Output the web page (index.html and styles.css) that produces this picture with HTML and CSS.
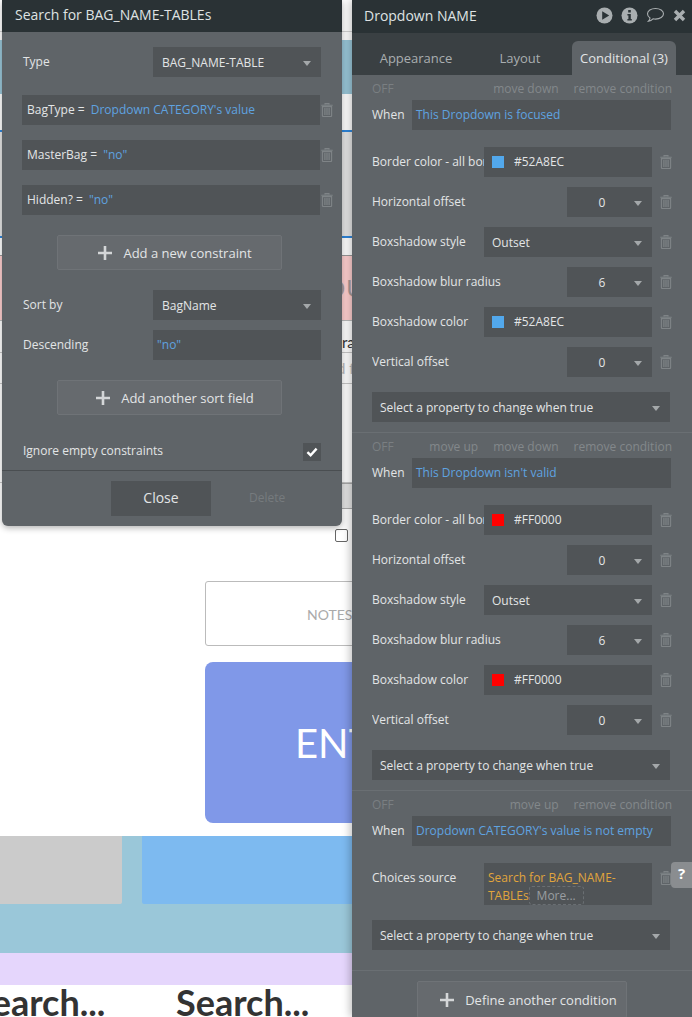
FILE: index.html
```html
<!DOCTYPE html>
<html lang="en">

<head>
    <meta charset="UTF-8">
    <meta name="viewport" content="width=device-width, initial-scale=1.0">
    <title>Dropdown NAME</title>
    <link rel="stylesheet" href="styles.css">
</head>

<body>
    <svg class="defs" width="0" height="0">
        <symbol id="trash" viewBox="0 0 12 14">
            <path d="M4 1.5V.6h4v.9M.3 2.2h11.4" fill="none" stroke="currentColor" stroke-width="1.1" />
            <path d="M1.4 3.6h9.2v9a1 1 0 0 1-1 1H2.4a1 1 0 0 1-1-1z" fill="none" stroke="currentColor" stroke-width="1.1" />
            <path d="M3.9 5v7M6 5v7M8.1 5v7" fill="none" stroke="currentColor" stroke-width="1.2" />
        </symbol>
        <symbol id="plus" viewBox="0 0 14 14">
            <path d="M7 0v14M0 7h14" fill="none" stroke="currentColor" stroke-width="2.6" />
        </symbol>
    </svg>

    <!-- page behind the palettes -->
    <div class="page">
        <div class="band top-white"></div>
        <div class="band teal-strip"></div>
        <div class="band white-gap"></div>
        <div class="band grey-block"></div>
        <div class="band white-small"></div>
        <div class="band pink"><span>OU</span></div>
        <div class="band row-ra"><span>ra</span></div>
        <div class="band row-df"><span>d f</span></div>
        <div class="band row-gap"></div>
        <div class="band row-input"></div>
        <div class="check-row"><div class="fake-check"></div></div>
        <div class="notes">NOTES ABOUT THIS ENTRY</div>
        <div class="enter">ENTER</div>
        <div class="teal-area">
            <div class="grey-tile"></div>
            <div class="blue-tile"></div>
        </div>
        <div class="lilac"></div>
        <div class="search-row">
            <div class="search-text first">Search...</div>
            <div class="search-text">Search...</div>
        </div>
    </div>

    <!-- search palette -->
    <div class="palette search-palette">
        <div class="head">Search for BAG_NAME-TABLEs</div>
        <div class="search-body">
            <div class="line-row">
                <div class="line-label">Type</div>
                <div class="field select-field wide">BAG_NAME-TABLE<i class="caret"></i></div>
            </div>
            <div class="constraint">
                <div class="field grow">BagType = <span class="dyn">Dropdown CATEGORY's value</span></div>
                <svg class="trash"><use href="#trash" /></svg>
            </div>
            <div class="constraint">
                <div class="field grow">MasterBag = <span class="dyn">"no"</span></div>
                <svg class="trash"><use href="#trash" /></svg>
            </div>
            <div class="constraint">
                <div class="field grow">Hidden? = <span class="dyn">"no"</span></div>
                <svg class="trash"><use href="#trash" /></svg>
            </div>
            <div class="big-btn add-constraint"><svg class="plus"><use href="#plus" /></svg>Add a new constraint</div>
            <div class="line-row sort-row">
                <div class="line-label">Sort by</div>
                <div class="field select-field wide">BagName<i class="caret"></i></div>
            </div>
            <div class="line-row desc-row">
                <div class="line-label">Descending</div>
                <div class="field wide tight dyn">"no"</div>
            </div>
            <div class="big-btn add-sort"><svg class="plus"><use href="#plus" /></svg>Add another sort field</div>
            <div class="line-row ignore-row">
                <div class="line-label">Ignore empty constraints</div>
                <div class="checkbox">
                    <svg width="12" height="10" viewBox="0 0 12 10"><path d="M1.4 5.2l3.2 3L10.6 1.6" fill="none" stroke="#fff" stroke-width="2.4" /></svg>
                </div>
            </div>
        </div>
        <div class="foot">
            <div class="close-btn">Close</div>
            <div class="delete-btn">Delete</div>
        </div>
    </div>

    <!-- property editor -->
    <div class="palette editor">
        <div class="head editor-head">
            <span>Dropdown NAME</span>
            <div class="head-icons">
                <svg width="17" height="17" viewBox="0 0 17 17"><circle cx="8.5" cy="8.5" r="8" fill="#a9aeb0" /><path d="M6.2 4.2l7 4.3-7 4.3z" fill="#2b3336" /></svg>
                <svg width="17" height="17" viewBox="0 0 17 17"><circle cx="8.5" cy="8.5" r="8" fill="#a9aeb0" /><path d="M7.2 3h2.6v2.4H7.2zM6.4 7h3.4v5h1v1.6H6.4V12h1V8.6h-1z" fill="#2b3336" /></svg>
                <svg width="19" height="17" viewBox="0 0 19 17"><path d="M9.5 1.5c4.6 0 8 2.3 8 5.3s-3.4 5.300-8 5.300c-.9 0-1.700-.1-2.500-.3-1.300 1.300-2.800 2.100-4.500 2.400.9-.9 1.400-1.900 1.500-3.200-1.700-1-2.500-2.500-2.500-4.200 0-3 3.400-5.300 8-5.300z" fill="none" stroke="#a9aeb0" stroke-width="1.100" /></svg>
                <svg width="13" height="13" viewBox="0 0 13 13"><path d="M2 2l9 9M11 2l-9 9" fill="none" stroke="#a9aeb0" stroke-width="3.400" /></svg>
            </div>
        </div>
        <div class="tabs">
            <div class="tab">Appearance</div>
            <div class="tab">Layout</div>
            <div class="tab active">Conditional (3)</div>
        </div>

        <div class="cond">
            <div class="cond-top">
                <span class="off">OFF</span>
                <span class="cond-actions"><span>move down</span><span>remove condition</span></span>
            </div>
            <div class="when-row">
                <div class="when-label">When</div>
                <div class="field grow dyn">This Dropdown is focused</div>
            </div>
            <div class="props">
                <div class="prop"><div class="prop-label">Border color - all borders</div><div class="field color-field"><i class="swatch sw-blue"></i>#52A8EC</div><svg class="trash"><use href="#trash" /></svg></div>
                <div class="prop"><div class="prop-label">Horizontal offset</div><div class="field num-field">0<i class="caret"></i></div><svg class="trash"><use href="#trash" /></svg></div>
                <div class="prop"><div class="prop-label">Boxshadow style</div><div class="field select-field prop-select">Outset<i class="caret"></i></div><svg class="trash"><use href="#trash" /></svg></div>
                <div class="prop"><div class="prop-label">Boxshadow blur radius</div><div class="field num-field">6<i class="caret"></i></div><svg class="trash"><use href="#trash" /></svg></div>
                <div class="prop"><div class="prop-label">Boxshadow color</div><div class="field color-field"><i class="swatch sw-blue"></i>#52A8EC</div><svg class="trash"><use href="#trash" /></svg></div>
                <div class="prop"><div class="prop-label">Vertical offset</div><div class="field num-field">0<i class="caret"></i></div><svg class="trash"><use href="#trash" /></svg></div>
            </div>
            <div class="field select-field pick">Select a property to change when true<i class="caret"></i></div>
        </div>

        <div class="cond">
            <div class="cond-top">
                <span class="off">OFF</span>
                <span class="cond-actions"><span>move up</span><span>move down</span><span>remove condition</span></span>
            </div>
            <div class="when-row">
                <div class="when-label">When</div>
                <div class="field grow dyn">This Dropdown isn't valid</div>
            </div>
            <div class="props">
                <div class="prop"><div class="prop-label">Border color - all borders</div><div class="field color-field"><i class="swatch sw-red"></i>#FF0000</div><svg class="trash"><use href="#trash" /></svg></div>
                <div class="prop"><div class="prop-label">Horizontal offset</div><div class="field num-field">0<i class="caret"></i></div><svg class="trash"><use href="#trash" /></svg></div>
                <div class="prop"><div class="prop-label">Boxshadow style</div><div class="field select-field prop-select">Outset<i class="caret"></i></div><svg class="trash"><use href="#trash" /></svg></div>
                <div class="prop"><div class="prop-label">Boxshadow blur radius</div><div class="field num-field">6<i class="caret"></i></div><svg class="trash"><use href="#trash" /></svg></div>
                <div class="prop"><div class="prop-label">Boxshadow color</div><div class="field color-field"><i class="swatch sw-red"></i>#FF0000</div><svg class="trash"><use href="#trash" /></svg></div>
                <div class="prop"><div class="prop-label">Vertical offset</div><div class="field num-field">0<i class="caret"></i></div><svg class="trash"><use href="#trash" /></svg></div>
            </div>
            <div class="field select-field pick">Select a property to change when true<i class="caret"></i></div>
        </div>

        <div class="cond last">
            <div class="cond-top">
                <span class="off">OFF</span>
                <span class="cond-actions"><span>move up</span><span>remove condition</span></span>
            </div>
            <div class="when-row">
                <div class="when-label">When</div>
                <div class="field grow dyn">Dropdown CATEGORY's value is not empty</div>
            </div>
            <div class="props">
                <div class="prop source-prop">
                    <div class="prop-label">Choices source</div>
                    <div class="field source-field"><span class="orange">Search for BAG_NAME-<br>TABLEs</span><span class="more">More...</span></div>
                    <svg class="trash"><use href="#trash" /></svg>
                </div>
            </div>
            <div class="field select-field pick">Select a property to change when true<i class="caret"></i></div>
        </div>

        <div class="big-btn define"><svg class="plus"><use href="#plus" /></svg>Define another condition</div>
        <div class="help">?</div>
    </div>
</body>

</html>
```

FILE: styles.css
```css
* {
    margin: 0px;
    padding: 0px;
    box-sizing: border-box;
}

html,
body {
    width: 692px;
    height: 1017px;
    overflow: hidden;
    background: #fff;
}

body {
    position: relative;
    font-family: "Open Sans", "Liberation Sans", sans-serif;
    font-size: 12px;
}

.defs {
    position: absolute;
}

/* page behind */
.page {
    width: 692px;
    font-family: Lato, "Liberation Sans", sans-serif;
}

.band {
    border-bottom: 1px solid #c8c8c8;
}

.top-white {
    height: 32px;
    border-bottom-color: #d4d4d4;
    margin-bottom: 8px;
}

.teal-strip {
    height: 54px;
    background: #9ac7d9;
    border: 0;
}

.white-gap {
    height: 38px;
    border-bottom: 2px solid #2f86dc;
}

.grey-block {
    height: 106px;
    background: #e5e5e5;
    border-bottom: 2px solid #2f86dc;
}

.white-small {
    height: 18px;
    border-bottom: 1px solid #999;
}

.pink {
    height: 65px;
    background: #ffd0d0;
    border-bottom: 1px solid #bbb;
    color: #a99a9a;
    font-size: 24px;
    line-height: 64px;
    padding-left: 326px;
    letter-spacing: 1px;
}

.row-ra {
    height: 32px;
    color: #333;
    font-size: 15px;
    line-height: 42px;
    padding-left: 342px;
}

.row-df {
    height: 31px;
    color: #bbb;
    font-size: 15px;
    line-height: 30px;
    padding-left: 337px;
}

.row-gap {
    height: 99px;
}

.row-input {
    height: 26px;
    margin-left: 342px;
    background: #e5e5e5;
    border-top: 1px solid #aaa;
    border-bottom: 1px solid #aaa;
}

.check-row {
    height: 72px;
    padding: 20px 0px 0px 335px;
}

.fake-check {
    width: 13px;
    height: 13px;
    border: 1px solid #666;
    border-radius: 2px;
    background: #fff;
}

.notes {
    width: 300px;
    height: 65px;
    margin-left: 205px;
    padding-left: 101px;
    border: 1px solid #bbb;
    border-radius: 3px;
    color: #aaa;
    font-size: 14px;
    line-height: 65px;
    white-space: nowrap;
}

.enter {
    width: 300px;
    height: 161px;
    margin: 16px 0px 13px 205px;
    padding-left: 90px;
    background: #8098e8;
    border-radius: 8px;
    color: #fff;
    font-size: 40px;
    line-height: 163px;
}

.teal-area {
    display: flex;
    height: 117px;
    background: #9ac7d9;
}

.grey-tile {
    width: 122px;
    height: 68px;
    background: #cbcbcb;
    border-radius: 0px 0px 2px 0px;
}

.blue-tile {
    width: 300px;
    height: 68px;
    margin-left: 20px;
    background: #7dbaf0;
    border-radius: 0px 0px 0px 2px;
}

.lilac {
    height: 32px;
    background: #e5d6fc;
}

.search-row {
    display: flex;
    gap: 71px;
    margin-left: -28px;
}

.search-text {
    width: 133px;
    color: #333;
    font-size: 36px;
    font-weight: 700;
    line-height: 34px;
    white-space: nowrap;
}

/* palettes */
.palette {
    position: absolute;
    top: 0px;
    background: #5f6468;
    color: #e3e5e6;
}

.search-palette {
    left: 2px;
    width: 340px;
    height: 526px;
    border-radius: 0px 0px 6px 6px;
    box-shadow: 0px 2px 6px rgba(0, 0, 0, 0.3);
}

.editor {
    left: 352px;
    width: 340px;
    height: 1017px;
    box-shadow: -2px 0px 8px rgba(0, 0, 0, 0.25);
}

.head {
    height: 32px;
    background: #2a3235;
    padding-left: 13px;
    font-size: 14px;
    line-height: 30px;
    color: #dfe2e3;
}

.editor-head {
    display: flex;
    justify-content: space-between;
    align-items: center;
    height: 33px;
    padding: 0px 6px 3px 12px;
    line-height: normal;
}

.head-icons {
    display: flex;
    align-items: center;
    gap: 8px;
    padding-top: 1px;
}

.field {
    height: 30px;
    background: #505457;
    line-height: 30px;
    white-space: nowrap;
}

.grow {
    flex: 1;
    padding-left: 4px;
}

.dyn {
    color: #5fa3e0;
}

.constraint .grow {
    padding-left: 5px;
}

.constraint .dyn {
    margin-left: 3px;
}

.caret {
    position: absolute;
    top: 14px;
    right: 10px;
    width: 0px;
    height: 0px;
    border-left: 4.5px solid transparent;
    border-right: 4.5px solid transparent;
    border-top: 5px solid #a4a8aa;
}

.select-field {
    position: relative;
    padding-left: 9px;
    line-height: 32px;
}

.trash {
    width: 12px;
    height: 14px;
    color: #7f8487;
    flex-shrink: 0;
}

/* search palette rows */
.search-body {
    padding: 15px 21px 0px 21px;
}

.line-row {
    display: flex;
    justify-content: space-between;
    align-items: center;
}

.line-label {
    padding-bottom: 2px;
}

.wide {
    width: 168px;
}

.tight {
    padding-left: 4px;
}

.constraint {
    display: flex;
    align-items: center;
    gap: 1px;
    margin: 18px -12px 0px -1px;
}

.constraint + .constraint {
    margin-top: 15px;
}

.big-btn {
    display: flex;
    align-items: center;
    justify-content: center;
    height: 35px;
    padding-left: 11px;
    background: #666a6e;
    border: 1px solid #6f7377;
    border-radius: 2px;
    color: #e3e5e6;
    font-size: 13px;
}

.plus {
    width: 14px;
    height: 14px;
    margin-right: 11px;
    color: #d4d6d8;
}

.add-constraint,
.add-sort {
    width: 225px;
    margin: 20px 0px 0px 34px;
}

.sort-row {
    margin-top: 20px;
}

.desc-row {
    margin-top: 10px;
}

.ignore-row {
    margin-top: 27px;
}

.checkbox {
    display: flex;
    align-items: center;
    justify-content: center;
    width: 18px;
    height: 18px;
    background: #505457;
}

.foot {
    display: flex;
    height: 56px;
    margin-top: 9px;
    padding: 10px 0px 0px 109px;
    border-top: 1px solid #4a4e51;
}

.close-btn {
    width: 100px;
    height: 35px;
    background: #505457;
    font-size: 14px;
    line-height: 34px;
    text-align: center;
}

.delete-btn {
    margin-left: 38px;
    color: #767b7e;
    line-height: 34px;
}

/* editor tabs */
.tabs {
    display: flex;
    height: 42px;
    padding: 8px 0px 0px 12px;
    background: #3a4043;
    font-size: 13px;
}

.tab {
    width: 104px;
    color: #a9aeb0;
    line-height: 35px;
    text-align: center;
    white-space: nowrap;
}

.tab.active {
    background: #5f6468;
    border-radius: 6px 6px 0px 0px;
    color: #e3e5e6;
}

/* conditions */
.cond {
    padding: 7px 20px 10px 20px;
    border-bottom: 1px solid #6a6f73;
}

.cond.last {
    padding-bottom: 20px;
}

.cond-top {
    display: flex;
    justify-content: space-between;
    height: 14px;
    margin-bottom: 4px;
    line-height: 14px;
    color: #83888b;
}

.off {
    color: #7a7f82;
}

.cond-actions {
    display: flex;
    gap: 15px;
}

.when-row {
    display: flex;
    align-items: center;
    margin-right: 1px;
}

.when-label {
    width: 40px;
    padding-bottom: 2px;
}

.props {
    display: flex;
    flex-direction: column;
    gap: 10px;
    margin: 17px 0px 15px 0px;
}

.prop {
    display: flex;
    align-items: center;
    height: 30px;
}

.prop-label {
    flex: 1;
    min-width: 0;
    padding-bottom: 2px;
    overflow: hidden;
    white-space: nowrap;
}

.prop .trash {
    margin-left: 8px;
}

.color-field {
    display: flex;
    align-items: center;
    width: 168px;
    padding-left: 8px;
}

.swatch {
    width: 12px;
    height: 12px;
    margin-right: 10px;
}

.sw-blue {
    background: #52a8ec;
}

.sw-red {
    background: #ff0000;
}

.num-field {
    position: relative;
    width: 85px;
    padding-right: 15px;
    line-height: 32px;
    text-align: center;
}

.prop-select {
    width: 168px;
    padding-left: 8px;
}

.pick {
    width: 298px;
    padding-left: 8px;
}

.source-prop {
    align-items: flex-start;
    height: 42px;
}

.source-prop .prop-label {
    line-height: 30px;
}

.source-prop .trash {
    margin-top: 8px;
}

.source-field {
    width: 168px;
    height: 42px;
    padding: 6px 4px 0px 4px;
    line-height: 18px;
}

.orange {
    color: #e0a53c;
}

.more {
    padding: 0px 7px;
    color: #9a9ea1;
    border: 1px dashed #6a6f73;
    border-radius: 3px;
}

.define {
    width: 210px;
    height: 37px;
    margin: 10px 0px 0px 65px;
    padding-left: 13px;
}

.help {
    position: absolute;
    top: 862px;
    right: 0px;
    width: 21px;
    height: 26px;
    background: #8a8d90;
    border-radius: 4px 0px 0px 4px;
    color: #fff;
    font-size: 15px;
    font-weight: 700;
    line-height: 23px;
    text-align: center;
}
```
